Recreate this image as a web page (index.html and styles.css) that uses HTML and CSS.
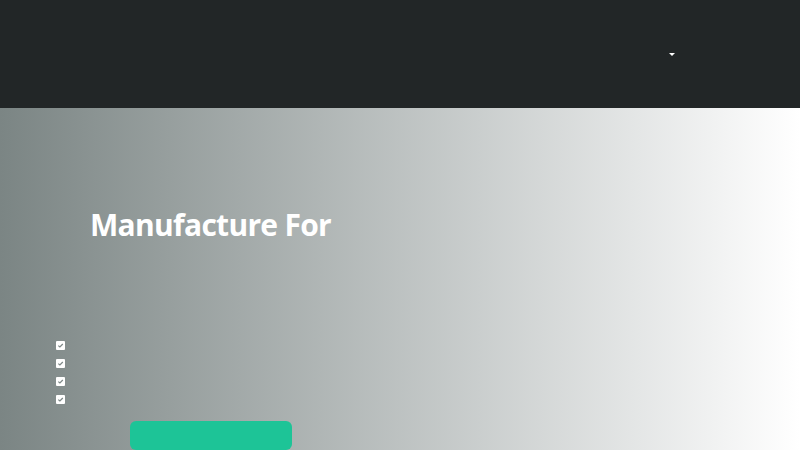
FILE: index.html
```html
<!DOCTYPE html>
<html>
<head>
<meta charset="utf-8">
<link rel="stylesheet" href="styles.css">
</head>
<body>
<header class="topbar">
  <nav class="nav">
    <span class="caret"></span>
  </nav>
</header>
<section class="hero">
  <h1 class="title">Manufacture For</h1>
  <ul class="checks">
    <li class="check"><svg viewBox="0 0 9 9" width="9" height="9"><rect width="9" height="9" rx="1" fill="#fff"/><path d="M2.3 4.6 L3.9 6 L6.8 3" stroke="#7d8786" stroke-width="1.2" fill="none"/></svg></li>
    <li class="check"><svg viewBox="0 0 9 9" width="9" height="9"><rect width="9" height="9" rx="1" fill="#fff"/><path d="M2.3 4.6 L3.9 6 L6.8 3" stroke="#7d8786" stroke-width="1.2" fill="none"/></svg></li>
    <li class="check"><svg viewBox="0 0 9 9" width="9" height="9"><rect width="9" height="9" rx="1" fill="#fff"/><path d="M2.3 4.6 L3.9 6 L6.8 3" stroke="#7d8786" stroke-width="1.2" fill="none"/></svg></li>
    <li class="check"><svg viewBox="0 0 9 9" width="9" height="9"><rect width="9" height="9" rx="1" fill="#fff"/><path d="M2.3 4.6 L3.9 6 L6.8 3" stroke="#7d8786" stroke-width="1.2" fill="none"/></svg></li>
  </ul>
  <div class="btn"></div>
</section>
</body>
</html>
```
FILE: styles.css
```css
html, body {
  margin: 0;
  padding: 0;
  height: 100%;
  overflow: hidden;
}
body {
  font-family: "Open Sans", "Liberation Sans", sans-serif;
}
.topbar {
  height: 108px;
  background: #222627;
}
.nav {
  display: flex;
  justify-content: flex-end;
  padding: 53px 125px 0 0;
}
.caret {
  width: 0;
  height: 0;
  border-left: 3.5px solid transparent;
  border-right: 3.5px solid transparent;
  border-top: 3.5px solid #fff;
}
.hero {
  height: 342px;
  background: linear-gradient(to right, #7b8584 0%, #ffffff 100%);
  display: flex;
  flex-direction: column;
  overflow: hidden;
}
.title {
  margin: 97px 0 0 90px;
  font-family: "Open Sans", sans-serif;
  font-weight: 700;
  font-size: 30px;
  letter-spacing: -0.7px;
  line-height: 40px;
  color: #fff;
}
.checks {
  list-style: none;
  margin: 96px 0 0 56px;
  padding: 0;
  display: flex;
  flex-direction: column;
  gap: 9px;
}
.check {
  height: 9px;
  line-height: 0;
}
.btn {
  margin: 17px 0 0 130px;
  width: 162px;
  height: 60px;
  background: #1dc497;
  border-radius: 6px;
}
```
